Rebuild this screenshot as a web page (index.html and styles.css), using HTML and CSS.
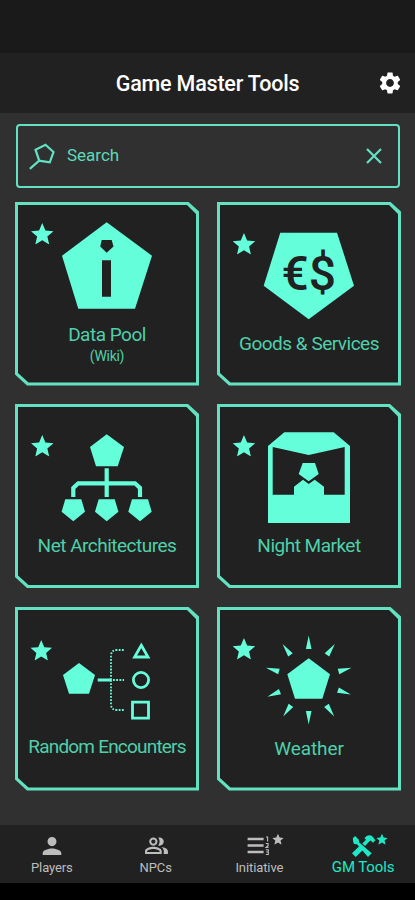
FILE: index.html
```html
<!DOCTYPE html>
<html lang="en">
<head>
    <meta charset="UTF-8">
    <meta name="viewport" content="width=device-width, initial-scale=1.0">
    <title>Game Master Tools</title>
    <link rel="stylesheet" href="styles.css">
</head>
<body>
    <!-- shared shapes -->
    <svg class="defs" width="0" height="0">
        <symbol id="star" viewBox="2 2 20 19">
            <path d="M12 17.270L18.180 21l-1.640-7.030L22 9.240l-7.190-.610L12 2 9.190 8.630 2 9.240l5.460 4.730L5.820 21z"/>
        </symbol>
        <path id="ray" d="M91.7 28.5l2.8 13.5h-5.6z"/>
        <path id="node" d="M-8 0H8L11.7 12.4 0 22-11.7 12.4z"/>
    </svg>

    <div class="status-bar"></div>
    <header class="header">
        <h1>Game Master Tools</h1>
        <svg class="gear" viewBox="0 0 24 24">
            <path d="M19.14 12.94c.04-.3.06-.61.06-.94 0-.32-.02-.64-.07-.94l2.03-1.58c.18-.14.23-.41.12-.61l-1.92-3.32c-.12-.22-.37-.29-.59-.22l-2.39.96c-.5-.38-1.03-.7-1.62-.94l-.36-2.54c-.04-.24-.24-.41-.48-.41h-3.84c-.24 0-.43.17-.47.41l-.36 2.54c-.59.24-1.13.57-1.62.94l-2.39-.96c-.22-.08-.47 0-.59.22L2.74 8.87c-.12.21-.08.47.12.61l2.03 1.58c-.05.3-.09.63-.09.94s.02.64.07.94l-2.03 1.58c-.18.14-.23.41-.12.61l1.92 3.32c.12.22.37.29.59.22l2.39-.96c.5.38 1.03.7 1.62.94l.36 2.54c.05.24.24.41.48.41h3.84c.24 0 .44-.17.47-.41l.36-2.54c.59-.24 1.13-.56 1.62-.94l2.39.96c.22.08.47 0 .59-.22l1.92-3.32c.12-.22.07-.47-.12-.61l-2.01-1.58zM12 15.6c-1.98 0-3.6-1.62-3.6-3.6s1.62-3.6 3.6-3.6 3.6 1.62 3.6 3.6-1.62 3.6-3.6 3.6z"/>
        </svg>
    </header>

    <main class="content">
        <div class="search">
            <svg class="loupe" viewBox="0 0 28 28">
                <path d="M17.5 2.7L25.5 10 21.8 20.3 11.2 18.7 7.5 7.7zM11.2 18.7L1.8 26.8"/>
            </svg>
            <span class="search-text">Search</span>
            <svg class="clear" viewBox="0 0 16 16">
                <path d="M1 1l14 14M15 1L1 15"/>
            </svg>
        </div>

        <div class="grid">
            <div class="card card-wiki">
                <svg class="art" viewBox="0 0 184 120">
                    <use href="#star" x="16" y="21" width="22.5" height="21.5"/>
                    <path d="M91.7 20.3L137 53.7 120 106.7H63.3L47 53.7z"/>
                    <path class="cut" d="M86.7 38h10l1.8 6.5-6.8 6.2-6.5-6.2zM87 58.3h9v36.4h-9z"/>
                </svg>
                <div class="label">Data Pool</div>
                <div class="sub">(Wiki)</div>
            </div>
            <div class="card">
                <svg class="art" viewBox="0 0 184 120">
                    <use href="#star" x="15.7" y="31" width="22.5" height="21.5"/>
                    <path d="M63.3 30.7H120L137 83.7 91.7 117.3 46.7 83.7z"/>
                    <text class="money" x="64.5" y="87.5" textLength="54.5" lengthAdjust="spacingAndGlyphs">€$</text>
                </svg>
                <div class="label">Goods &amp; Services</div>
            </div>
            <div class="card">
                <svg class="art" viewBox="0 0 184 120">
                    <use href="#star" x="16" y="31" width="22.5" height="21.5"/>
                    <path d="M91.7 30.3L109 43 102.7 62.3H81L75 43z"/>
                    <path class="pipe" d="M91.7 64.3V93M58.3 93V84l5-4.7H120l5 4.7v9"/>
                    <use href="#node" x="58.3" y="95.3"/>
                    <use href="#node" x="91.7" y="95.3"/>
                    <use href="#node" x="125" y="95.3"/>
                </svg>
                <div class="label">Net Architectures</div>
            </div>
            <div class="card">
                <svg class="art" viewBox="0 0 184 120">
                    <use href="#star" x="15.7" y="31" width="22.5" height="21.5"/>
                    <path d="M51 42L67.3 28.3h49.4L133 42v77H51z"/>
                    <path class="cut" d="M55.7 43l36 8 36-8v47.7H107v-8l-9.3-7-6 4.3-5.7-4.3-9 7v8H55.7z"/>
                    <path d="M85.7 59H98l3.7 11-10 7.3-10-7.3z"/>
                </svg>
                <div class="label">Night Market</div>
            </div>
            <div class="card card-random">
                <svg class="art" viewBox="0 0 184 120">
                    <use href="#star" x="15.5" y="33" width="21.5" height="20.5"/>
                    <path d="M64 56l16 12-6 18.7H54L48 68z"/>
                    <path class="line" d="M82.7 73H96"/>
                    <path class="dots" d="M96 73V49q0-6 6-6h7M96 73v24q0 6 6 6h7M98 73h11"/>
                    <path class="line" d="M126.3 38.3L133 50h-13.4z"/>
                    <circle class="line" cx="126" cy="73" r="7.6"/>
                    <path class="line" d="M117.5 95.2h16v16h-16z"/>
                </svg>
                <div class="label">Random Encounters</div>
            </div>
            <div class="card card-weather">
                <svg class="art" viewBox="0 0 184 120">
                    <use href="#star" x="15.7" y="31" width="22.5" height="21.5"/>
                    <path d="M91.7 51.3l21.3 16-7.7 24.4H78l-7.7-24.4z"/>
                    <use href="#ray"/>
                    <use href="#ray" transform="rotate(36 91.7 73)"/>
                    <use href="#ray" transform="rotate(74 91.7 73)"/>
                    <use href="#ray" transform="rotate(109 91.7 73)"/>
                    <use href="#ray" transform="rotate(145 91.7 73)"/>
                    <use href="#ray" transform="rotate(180 91.7 73)"/>
                    <use href="#ray" transform="rotate(215 91.7 73)"/>
                    <use href="#ray" transform="rotate(248 91.7 73)"/>
                    <use href="#ray" transform="rotate(286 91.7 73)"/>
                    <use href="#ray" transform="rotate(324 91.7 73)"/>
                </svg>
                <div class="label">Weather</div>
            </div>
        </div>
    </main>

    <nav class="tabs">
        <div class="tab">
            <svg viewBox="0 0 60 24">
                <path d="M30 12.2c2.5 0 4.5-2 4.5-4.6S32.500 3 30 3s-4.500 2-4.500 4.600 2 4.600 4.500 4.600zm0 2.300c-3.100 0-9.300 1.500-9.300 4.500v2h18.600v-2c0-3-6.200-4.500-9.300-4.500z"/>
            </svg>
            <span>Players</span>
        </div>
        <div class="tab">
            <svg viewBox="0 0 60 24">
                <g transform="translate(18 -.7) scale(1.04)">
                    <path d="M16.670 13.130C18.040 14.060 19 15.320 19 17v3h4v-3c0-2.180-3.570-3.470-6.330-3.870zM15 12c2.210 0 4-1.790 4-4s-1.790-4-4-4c-.470 0-.910.100-1.330.240C14.500 5.270 15 6.580 15 8s-.500 2.730-1.330 3.760c.420.140.860.240 1.330.240zM9 12c2.210 0 4-1.790 4-4s-1.790-4-4-4-4 1.790-4 4 1.790 4 4 4zm0-6c1.100 0 2 .9 2 2s-.9 2-2 2-2-.9-2-2 .9-2 2-2zM9 13c-2.670 0-8 1.340-8 4v3h16v-3c0-2.660-5.330-4-8-4zm6 5H3v-.990C3.200 16.290 6.300 15 9 15s5.800 1.290 6 2v1z"/>
                </g>
            </svg>
            <span>NPCs</span>
        </div>
        <div class="tab">
            <svg viewBox="0 0 60 24">
                <path d="M18.600 3.700h16v2.600h-16zM18.600 10.200h16v2.600h-16zM18.600 16.700h16v2.600h-16z"/>
                <path class="digits" d="M37 3h1.600v4.500M36.800 9.500h2.300v2l-2 1.900h2.400M36.800 15.800h2.500v4.700h-2.500M37.200 18h2"/>
                <use href="#star" x="43.200" y="-.3" width="11.500" height="11"/>
            </svg>
            <span>Initiative</span>
        </div>
        <div class="tab active">
            <svg viewBox="0 0 60 24">
                <!-- wrench, then hammer -->
                <path d="M19.8 4.300l2.300-2.300 3.700 3.700.2 2.600 12.700 10.900-3.700 3.700L24 10.300l-2.900-.3-.9-1.900z"/>
                <path d="M19 19.200l8.400-8.200 3.800 3.700-8.500 8.300zM29.300 9.500L33 5.700l-1.500-1.500C33.500 1.200 37 .2 39.500 2.400l2.900 3.800-2.400 2.600-2.300-2.200-1.500.9-4.100 4.400z"/>
                <use href="#star" x="43.200" y="-.3" width="11.500" height="11"/>
            </svg>
            <span>GM Tools</span>
        </div>
    </nav>
</body>
</html>
```
FILE: styles.css
```css
:root {
    --accent: #64ffda;
    --frame: #62e2c1;
    --text: #4fd0aa;
    --panel: #212121;
}
* {
    box-sizing: border-box;
    margin: 0;
    padding: 0;
}
html, body {
    height: 100%;
}
body {
    background-color: #000;
    display: flex;
    flex-direction: column;
    font-family: Roboto, "Liberation Sans", sans-serif;
    height: 900px;
    overflow: hidden;
    padding-bottom: 17px;
}
svg {
    display: block;
    flex: none;
}
.defs {
    position: absolute;
}
.status-bar {
    background: #1a1a1a;
    height: 53px;
}
.header {
    align-items: center;
    background: var(--panel);
    color: #fff;
    display: grid;
    grid-template-columns: 1fr auto 1fr;
    height: 60px;
    padding: 0 12px;
}
h1 {
    font-size: 21.5px;
    font-weight: 500;
    grid-column: 2;
    letter-spacing: -.2px;
    white-space: nowrap;
}
.gear {
    fill: #fff;
    height: 26px;
    justify-self: end;
    width: 26px;
}
.content {
    background: #303030;
    flex: 1;
    padding: 11px 14px 0 15px;
}
.search {
    align-items: center;
    border: 2.5px solid var(--frame);
    border-radius: 4px;
    display: flex;
    height: 64px;
    margin: 0 1px;
    padding: 0 16px 0 10px;
}
.search-text {
    color: #5fd9b9;
    flex: 1;
    font-size: 17px;
    margin-left: 11px;
    padding-bottom: 2px;
}
.loupe, .clear {
    fill: none;
    stroke: var(--frame);
    stroke-width: 2.2;
}
.loupe {
    height: 28px;
    width: 28px;
}
.clear {
    height: 16px;
    width: 16px;
}
.grid {
    display: grid;
    gap: 18.5px 18px;
    grid-template-columns: 184px 184px;
    margin-top: 13.5px;
}
.card {
    background: var(--frame);
    clip-path: polygon(0 0, 173px 0, 100% 10px, 100% 100%, 12px 100%, 0 173px);
    height: 184px;
    position: relative;
    text-align: center;
}
/* dark face inside the cut-corner frame */
.card::before {
    background: var(--panel);
    clip-path: polygon(0 0, 168.5px 0, 100% 9.5px, 100% 100%, 10.5px 100%, 0 168.5px);
    content: "";
    inset: 3px;
    position: absolute;
}
.art, .label, .sub {
    position: relative;
}
.art {
    fill: var(--accent);
    height: 120px;
    width: 184px;
}
.cut, .money {
    fill: var(--panel);
}
.money {
    font-size: 48px;
    font-weight: 500;
}
.pipe, .line, .dots {
    fill: none;
    stroke: var(--accent);
}
.pipe {
    stroke-width: 4.2;
}
.line {
    stroke-width: 2.8;
}
.dots {
    stroke-dasharray: 1.8 1.4;
    stroke-width: 1.8;
}
.label {
    color: var(--text);
    font-size: 19px;
    letter-spacing: -.5px;
    line-height: 24px;
    margin-top: 10px;
    white-space: nowrap;
}
.card-wiki .label {
    margin-top: 1px;
}
.card-random .label {
    letter-spacing: -.8px;
    margin-top: 8px;
}
.card-weather .label {
    letter-spacing: -.1px;
}
.sub {
    color: var(--text);
    font-size: 14px;
    letter-spacing: -.3px;
    line-height: 16px;
    margin-top: 1px;
}
.tabs {
    background: var(--panel);
    display: grid;
    grid-template-columns: repeat(4, 1fr);
    height: 58px;
}
.tab {
    align-items: center;
    color: #bdbdbd;
    display: flex;
    flex-direction: column;
    font-size: 13px;
    padding-top: 9px;
}
.tab svg {
    fill: currentColor;
    height: 24px;
    width: 60px;
}
.tab span {
    letter-spacing: -.1px;
    line-height: 20px;
}
.digits {
    fill: none;
    stroke: currentColor;
    stroke-width: 1.1;
}
.active {
    color: #1de9c6;
    font-size: 15px;
}
.active span {
    line-height: 18px;
}
```
